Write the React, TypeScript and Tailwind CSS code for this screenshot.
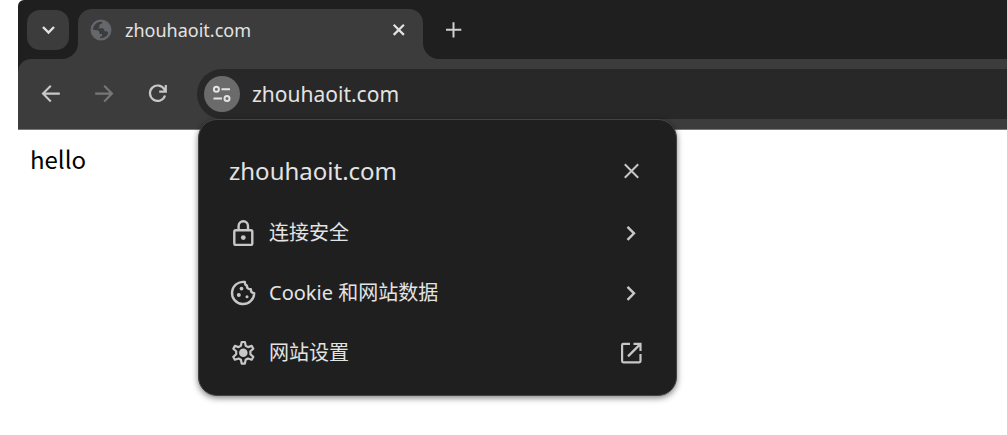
import type { ReactNode } from "react"

const SITE = "zhouhaoit.com"

type IconProps = {
  size: number
  stroke?: number
  className?: string
  children: ReactNode
}

function Icon({ size, stroke = 2, className = "", children }: IconProps) {
  return (
    <svg
      width={size}
      height={size}
      viewBox={`0 0 ${size} ${size}`}
      fill="none"
      stroke="currentColor"
      strokeWidth={stroke}
      className={`shrink-0 ${className}`}
      aria-hidden="true"
    >
      {children}
    </svg>
  )
}

function ChevronRight() {
  return (
    <Icon size={24} stroke={2.4}>
      <path d="M8.5 5.8 15 12.3 8.5 18.8" />
    </Icon>
  )
}

function LockIcon() {
  return (
    <Icon size={26} stroke={2.4}>
      <rect x="4.3" y="10.3" width="18" height="14.6" rx="1.4" />
      <path d="M8.6 10.3V6a4.7 4.7 0 0 1 9.4 0v4.3" />
      <circle cx="13.3" cy="17.6" r="2.4" fill="currentColor" stroke="none" />
    </Icon>
  )
}

function CookieIcon() {
  return (
    <Icon size={26} stroke={2.4}>
      <path d="M14.8 2A11.1 11.1 0 1 0 24.2 13.2C21.8 12.8 20.6 11.3 20.9 9.1 18.4 9.4 16.6 7.8 17 5.6 15.5 5.2 14.8 3.7 14.8 2Z" strokeLinejoin="round" />
      <g fill="currentColor" stroke="none">
        <circle cx="11.5" cy="8.6" r="1.9" />
        <circle cx="8.8" cy="15" r="2" />
        <circle cx="17" cy="16.8" r="1.5" />
      </g>
    </Icon>
  )
}

function SettingsIcon() {
  return (
    <Icon size={26} stroke={2.2}>
      <path
        d="M11.7 2H14.9L15.7 5.8 18 7.1 21.7 5.9 23.3 8.7 20.4 11.3V14.3L23.3 16.9 21.7 19.7 18 18.5 15.7 19.8 14.9 23.6H11.7L10.9 19.8 8.6 18.5 4.9 19.7 3.3 16.9 6.2 14.3V11.3L3.3 8.7 4.9 5.9 8.6 7.1 10.9 5.8Z"
        strokeLinejoin="round"
      />
      <circle cx="13.3" cy="12.8" r="4.3" fill="currentColor" stroke="none" />
    </Icon>
  )
}

function OpenIcon() {
  return (
    <Icon size={24} stroke={2.2}>
      <path d="M11 2.9H4.3a1.2 1.2 0 0 0-1.2 1.2v16a1.2 1.2 0 0 0 1.2 1.2h16a1.2 1.2 0 0 0 1.2-1.2V13" />
      <path d="M14.5 2.9h7v7M21.5 2.9 9 15.4" />
    </Icon>
  )
}

function GlobeIcon() {
  return (
    <Icon size={22} stroke={2.3} className="text-[#64676b]">
      <circle cx="11" cy="11" r="9.3" />
      <path
        d="M12.5 2 12 4.5 9.5 5.5 9.5 8 7.5 9.2H12.5C14 9.2 14.4 10.6 14.4 12.2H16.3C17.8 12.2 18.2 13.3 18.4 15.3L20.4 11C20.2 6.3 17.3 2.9 12.5 2ZM1.7 10.5 7.2 11.3C9.3 11.7 9.6 13.3 9.6 15H12V17L10 18V20.2C5 19.8 1.8 15.5 1.7 10.5Z"
        fill="currentColor"
        stroke="none"
      />
    </Icon>
  )
}

function TabStrip() {
  return (
    <div className="flex h-[59px] items-start pl-[9px]">
      <button
        type="button"
        aria-label="Search tabs"
        className="mt-2.5 flex h-10 w-[42px] items-center justify-center rounded-[13px] bg-[#3c3c3c] text-[#e3e3e3]"
      >
        <Icon size={16} stroke={2.4}>
          <path d="m3 5 5.5 5.5L14 5" />
        </Icon>
      </button>

      {/* Active tab, flared into the toolbar on both sides */}
      <div className="relative mt-[9px] ml-[9px] flex h-[50px] w-[345px] items-center rounded-t-[14px] bg-[#3c3c3c] pr-4 pb-2 pl-3">
        <svg className="absolute bottom-0 -left-4 text-[#3c3c3c]" width="16" height="16" viewBox="0 0 16 16" aria-hidden="true">
          <path d="M16 0A16 16 0 0 1 0 16H16Z" fill="currentColor" />
        </svg>
        <svg className="absolute -right-4 bottom-0 text-[#3c3c3c]" width="16" height="16" viewBox="0 0 16 16" aria-hidden="true">
          <path d="M0 0A16 16 0 0 0 16 16H0Z" fill="currentColor" />
        </svg>
        <GlobeIcon />
        <span className="ml-[13px] grow text-[18px] leading-6 text-[#e3e3e3]">{SITE}</span>
        <button type="button" aria-label="Close tab" className="text-[#e3e3e3]">
          <Icon size={16} stroke={2.2}>
            <path d="m2.7 2.7 10.2 10.2m0-10.2L2.7 12.9" />
          </Icon>
        </button>
      </div>

      <button type="button" aria-label="New tab" className="mt-[21px] ml-[22px] text-[#d0d0d0]">
        <Icon size={18}>
          <path d="M8.5 1.2v15.3M1 8.8h15.3" />
        </Icon>
      </button>
    </div>
  )
}

type MenuRowProps = {
  icon: ReactNode
  label: string
  trailing: ReactNode
}

function MenuRow({ icon, label, trailing }: MenuRowProps) {
  return (
    <button type="button" className="flex h-[60px] w-full items-center pr-[33px] pl-[31px] text-left text-[#c7c7c7]">
      {icon}
      <span className="ml-[13px] grow text-[20px] leading-7 text-[#e3e3e3]">{label}</span>
      {trailing}
    </button>
  )
}

function SiteInfoPopup() {
  return (
    <div
      role="dialog"
      aria-label={SITE}
      className="absolute top-[50px] left-px w-[479px] rounded-[19px] border border-[#444] bg-[#1f1f1f] pb-3 shadow-[0_2px_6px_rgba(0,0,0,0.5)]"
    >
      <div className="flex h-[83px] items-center pt-[18px] pr-[33px] pl-[30px]">
        <h2 className="grow text-[24px] leading-8 text-[#e3e3e3]">{SITE}</h2>
        <button type="button" aria-label="Close" className="text-[#c7c7c7]">
          <Icon size={24}>
            <path d="m5.8 5.3 13.4 13.4m0-13.4L5.8 18.7" />
          </Icon>
        </button>
      </div>
      <MenuRow icon={<LockIcon />} label="连接安全" trailing={<ChevronRight />} />
      <MenuRow icon={<CookieIcon />} label="Cookie 和网站数据" trailing={<ChevronRight />} />
      <MenuRow icon={<SettingsIcon />} label="网站设置" trailing={<OpenIcon />} />
    </div>
  )
}

function Toolbar() {
  return (
    <div className="flex items-center rounded-tl-[13px] border-b border-[#777] bg-[#3c3c3c] pt-2.5 pb-[10px] pl-[15px] text-[#c7c7c7]">
      <div className="flex gap-[17px]">
        <button type="button" aria-label="Back" className="flex h-9 w-9 items-center justify-center">
          <Icon size={24} stroke={2.1}>
            <path d="M20.8 11.6H4.5M11.8 3.8 4 11.6l7.8 7.8" />
          </Icon>
        </button>
        <button type="button" aria-label="Forward" disabled className="flex h-9 w-9 items-center justify-center text-[#777]">
          <Icon size={24} stroke={2.1}>
            <path d="M3.2 11.6h16.3M12.2 3.8l7.8 7.8-7.8 7.8" />
          </Icon>
        </button>
        <button type="button" aria-label="Reload" className="flex h-9 w-9 items-center justify-center">
          <Icon size={24} stroke={2.2}>
            <path d="M20 13.5A7.7 7.7 0 1 1 19.4 7.5L20.5 9M20.8 3v6.6h-6.6" />
          </Icon>
        </button>
      </div>

      {/* Address bar */}
      <div className="relative ml-[22px] flex h-[50px] grow items-center rounded-l-full bg-[#282828] pl-[7px]">
        <button
          type="button"
          aria-label="View site information"
          className="flex h-9 w-9 items-center justify-center rounded-full bg-[#6b6b6b] text-[#e3e3e3]"
        >
          <Icon size={20}>
            <circle cx="4.4" cy="5.2" r="2.5" />
            <path d="M9.5 5.2h8.5M1.5 14.6H10" />
            <circle cx="15" cy="14.6" r="2.5" />
          </Icon>
        </button>
        <input
          type="text"
          aria-label="Address"
          defaultValue={SITE}
          className="ml-3 min-w-0 grow bg-transparent text-[21px] leading-7 text-[#e3e3e3] outline-none"
        />
        <SiteInfoPopup />
      </div>
    </div>
  )
}

export default function App() {
  return (
    <div className="min-h-screen overflow-hidden bg-white pl-[18px] font-['Noto_Sans','Noto_Sans_CJK_SC',sans-serif]">
      <header className="rounded-tl-[6px] bg-[#1f1f1f]">
        <TabStrip />
        <Toolbar />
      </header>
      <main className="px-3 pt-[13px] font-['Noto_Sans_CJK_SC',sans-serif] text-[24px] leading-8 text-black">
        hello
      </main>
    </div>
  )
}
